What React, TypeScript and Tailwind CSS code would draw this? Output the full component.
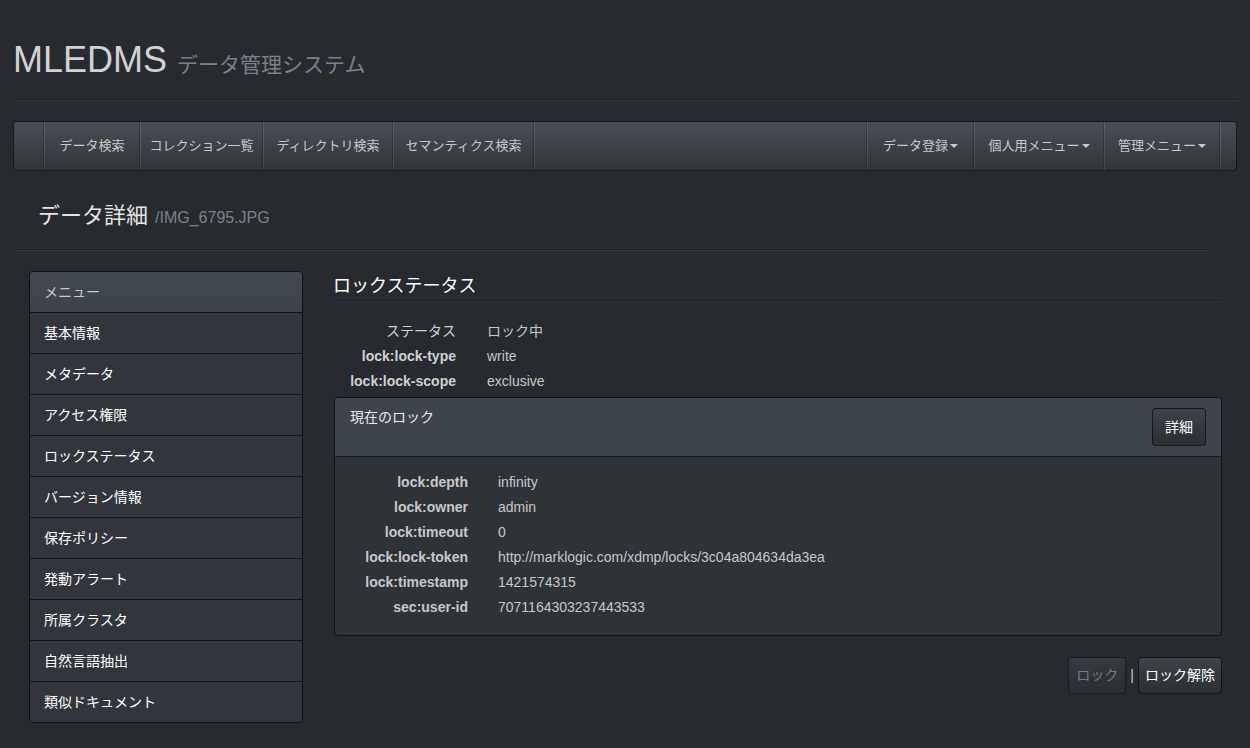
import React from "react";

const font = "font-['Liberation_Sans','Noto_Sans_CJK_JP',sans-serif]";

const leftNav = [
  { label: "データ検索", w: "w-[96px]" },
  { label: "コレクション一覧", w: "w-[123px]" },
  { label: "ディレクトリ検索", w: "w-[130px]" },
  { label: "セマンティクス検索", w: "w-[141px]" },
];

const rightNav = [
  { label: "データ登録", w: "w-[107px]" },
  { label: "個人用メニュー", w: "w-[130px]" },
  { label: "管理メニュー", w: "w-[116px]" },
];

const menu = [
  "基本情報",
  "メタデータ",
  "アクセス権限",
  "ロックステータス",
  "バージョン情報",
  "保存ポリシー",
  "発動アラート",
  "所属クラスタ",
  "自然言語抽出",
  "類似ドキュメント",
];

const status = [
  ["ステータス", "ロック中"],
  ["lock:lock-type", "write"],
  ["lock:lock-scope", "exclusive"],
];

const lock = [
  ["lock:depth", "infinity"],
  ["lock:owner", "admin"],
  ["lock:timeout", "0"],
  ["lock:lock-token", "http://marklogic.com/xdmp/locks/3c04a804634da3ea"],
  ["lock:timestamp", "1421574315"],
  ["sec:user-id", "7071164303237443533"],
];

function Caret() {
  return (
    <span className="ml-[2px] inline-block h-0 w-0 border-x-[4px] border-t-[4px] border-x-transparent border-t-[#c8c8c8] align-middle" />
  );
}

function NavItem({ label, w, caret }: { label: string; w: string; caret?: boolean }) {
  return (
    <div
      className={`${w} flex h-full items-center justify-center border-l border-l-white/10 border-r border-r-black/20 text-[13px] text-[#c8c8c8]`}
    >
      {label}
      {caret && <Caret />}
    </div>
  );
}

function Btn({ children, disabled, w = "" }: { children: React.ReactNode; disabled?: boolean; w?: string }) {
  return (
    <div
      className={`${w} flex items-center justify-center whitespace-nowrap rounded-[4px] border border-black/60 bg-[linear-gradient(#3e4349,#33373c_60%,#2c3035)] px-2 text-[14px] ${
        disabled ? "text-[#9a9ea3] opacity-70" : "text-white"
      }`}
    >
      {children}
    </div>
  );
}

function Hr({ className = "" }: { className?: string }) {
  return <div className={`h-[2px] border-t border-t-[#1c1e22] border-b border-b-[#33373d] ${className}`} />;
}

export default function App() {
  return (
    <div className={`${font} min-h-screen w-full overflow-hidden bg-[#272b30] pt-[40px] text-[#c8c8c8]`}>
      <div className="mx-[13px] w-[1224px]">
        {/* Title */}
        <div className="flex h-[40px] items-baseline">
          <span className="text-[36px] leading-[40px] text-[#d2d2d2]">MLEDMS</span>
          <span className="ml-[10px] text-[21px] text-[#7a8288]">データ管理システム</span>
        </div>
        <Hr className="mt-[19px]" />

        {/* Navbar */}
        <div className="mt-[20px] flex h-[50px] items-stretch rounded-[4px] border border-black/60 bg-[linear-gradient(#484e55,#3a3f44_60%,#313539)]">
          <div className="w-[30px] border-r border-r-black/20" />
          {leftNav.map((n) => (
            <NavItem key={n.label} {...n} />
          ))}
          <div className="flex-1 border-l border-l-white/10 border-r border-r-black/20" />
          {rightNav.map((n) => (
            <NavItem key={n.label} {...n} caret />
          ))}
          <div className="w-[16px] border-l border-l-white/10" />
        </div>

        {/* Page header */}
        <div className="mt-[30px] flex h-[30px] items-baseline pl-[25px]">
          <span className="text-[22px] leading-[30px] text-[#e4e4e4]">データ詳細</span>
          <span className="ml-[7px] text-[16px] text-[#7a8288]">/IMG_6795.JPG</span>
        </div>
        <Hr className="mr-[29px] mt-[18px]" />

        {/* Body */}
        <div className="mt-[20px] flex">
          <div className="w-[306px] px-[16px]">
            <div className="overflow-hidden rounded-[4px] border border-black/60">
              <div className="flex h-[40px] items-center bg-[linear-gradient(#434950,#3c4249)] px-[14px] text-[14px] text-[#c8c8c8]">
                メニュー
              </div>
              {menu.map((m) => (
                <div
                  key={m}
                  className="flex h-[41px] items-center border-t border-t-black/60 bg-[#32363c] px-[14px] text-[14px] text-white"
                >
                  {m}
                </div>
              ))}
            </div>
          </div>

          <div className="flex-1 pl-[14px] pr-[15px] pt-[3px]">
            <div className="flex h-[24px] items-center text-[18px] text-white">ロックステータス</div>
            <Hr className="mt-[2px]" />

            <div className="mt-[17px]">
              {status.map(([k, v], i) => (
                <div key={k} className="flex h-[25px] items-center text-[14px]">
                  <div className={`w-[123px] text-right text-[#d0d0d0] ${i === 0 ? "font-normal" : "font-bold"}`}>{k}</div>
                  <div className="ml-[31px] text-[#c8c8c8]">{v}</div>
                </div>
              ))}
            </div>

            <div className="ml-[1px] mt-[3px] overflow-hidden rounded-[4px] border border-black/60 bg-[#2e3338]">
              <div className="flex h-[59px] items-start justify-between border-b border-b-black/60 bg-[#3e444c] pl-[15px] pr-[15px]">
                <div className="mt-[9px] text-[14px] leading-[20px] text-[#eaeaea]">現在のロック</div>
                <div className="mt-[10px] flex h-[38px]">
                  <Btn w="w-[54px]">詳細</Btn>
                </div>
              </div>
              <div className="pb-[15px] pl-[15px] pt-[13px]">
                {lock.map(([k, v]) => (
                  <div key={k} className="flex h-[25px] items-center text-[14px]">
                    <div className="w-[118px] text-right font-bold text-[#c8c8c8]">{k}</div>
                    <div className="ml-[30px] text-[#c8c8c8]">{v}</div>
                  </div>
                ))}
              </div>
            </div>

            <div className="mt-[21px] flex h-[37px] items-center justify-end">
              <div className="flex h-full">
                <Btn disabled w="w-[58px]">ロック</Btn>
              </div>
              <span className="mx-[4px] text-[14px] text-[#c8c8c8]">|</span>
              <div className="flex h-full">
                <Btn w="w-[84px]">ロック解除</Btn>
              </div>
            </div>
          </div>
        </div>
      </div>
    </div>
  );
}
